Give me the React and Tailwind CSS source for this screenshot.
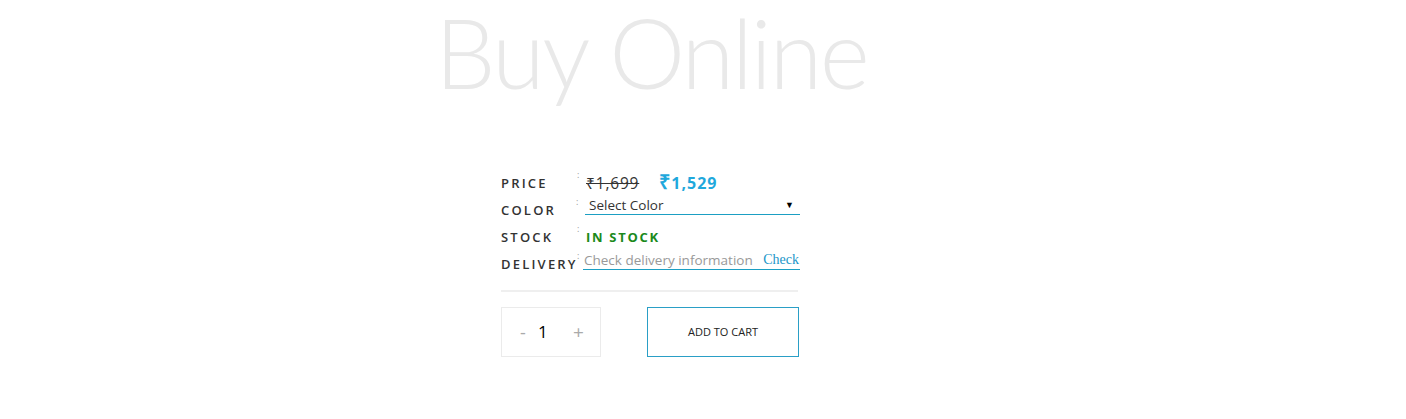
import React from 'react';

function Row({ label, children }) {
    return (
        <div className="flex items-end h-[27px]">
            <div className="w-[76px] text-[13px] font-semibold tracking-[2.2px] text-[#333] leading-[20px]">{label}</div>
            <div className="w-[9px] self-start pt-[4px] text-[9px] leading-none text-[#999]">:</div>
            <div className="flex-1 leading-[20px]">{children}</div>
        </div>
    );
}

export default function App() {
    return (
        <div className="min-h-[419px] bg-white font-['Open_Sans',sans-serif] text-[#333]">
            <div className="pl-[435px] h-[104px]">
                <h1 className="inline-block font-['Lato',sans-serif] font-light text-[96px] leading-[104px] tracking-[-2.5px] pr-[8px] text-[#e9e9e9] whitespace-nowrap">Buy Online</h1>
            </div>
            <div className="pl-[501px] pt-[62px] w-[800px]">
                <Row label="PRICE">
                    <span className="text-[15.5px] text-[#333] line-through tracking-[0.8px]">₹1,699</span>
                    <span className="ml-[20px] text-[16px] font-bold text-[#1fa8dc] tracking-[1px]"><span className="text-[20px]">₹</span>1,529</span>
                </Row>
                <Row label="COLOR">
                    <div className="w-[215px] flex items-center justify-between border-b border-[#1b9fc3] pl-[4px] pr-[6px] h-[20px] mb-[5px]">
                        <span className="text-[13.5px] text-[#333]">Select Color</span>
                        <span className="text-[9px] text-black">▼</span>
                    </div>
                </Row>
                <Row label="STOCK">
                    <span className="text-[13px] font-bold tracking-[1.7px] text-[#1b8a1b]">IN STOCK</span>
                </Row>
                <Row label="DELIVERY">
                    <div className="w-[217px] flex items-center justify-between border-b border-[#1b9fc3] pl-[1px] h-[20px] mb-[4px]">
                        <span className="text-[13.5px] text-[#999]">Check delivery information</span>
                        <span className="font-['Liberation_Serif',serif] text-[14px] text-[#2196c9] pr-[1px]">Check</span>
                    </div>
                </Row>
                <div className="w-[297px] border-t-2 border-[#efefef] mt-[16px]" />
                <div className="flex items-center mt-[15px]">
                    <div className="w-[100px] h-[50px] border border-[#ebebeb] flex items-center pl-[18px]">
                        <span className="text-[18px] text-[#aaa] w-[18px]">-</span>
                        <span className="text-[17px] text-black w-[35px]">1</span>
                        <span className="text-[19px] text-[#aaa]">+</span>
                    </div>
                    <div className="ml-[46px] w-[152px] h-[50px] border border-[#2a9fc6] flex items-center justify-center text-[11px] text-[#222]">ADD TO CART</div>
                </div>
            </div>
        </div>
    );
}
